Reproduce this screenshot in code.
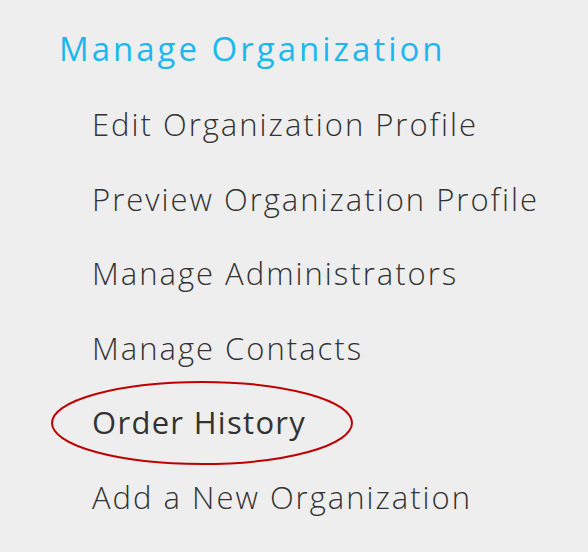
export default function App() {
  const items = [
    "Edit Organization Profile",
    "Preview Organization Profile",
    "Manage Administrators",
    "Manage Contacts",
    "Order History",
    "Add a New Organization",
  ];

  return (
    <div className="w-[588px] h-[552px] bg-[#eeeeee] overflow-hidden font-['Open_Sans',sans-serif]">
      <div className="pl-[59px] pt-[24px]">
        <h2 className="text-[33px] leading-[50px] tracking-[3px] text-[#1ab8ee] font-normal">
          Manage Organization
        </h2>
        <ul className="pl-[33px] mt-[13px]">
          {items.map((item) => (
            <li
              key={item}
              className={`relative text-[31px] leading-[74.5px] text-[#333333] ${
                item === "Order History" ? "font-medium tracking-[1.3px]" : "font-light tracking-[2px]"
              }`}
            >
              {item === "Order History" && (
                <svg
                  className="absolute left-[-41px] top-[-4px]"
                  width="304"
                  height="86"
                  viewBox="0 0 304 86"
                >
                  <ellipse cx="151" cy="42" rx="150" ry="41" fill="none" stroke="#c00000" strokeWidth="2" />
                </svg>
              )}
              <span className="relative">{item}</span>
            </li>
          ))}
        </ul>
      </div>
    </div>
  );
}
